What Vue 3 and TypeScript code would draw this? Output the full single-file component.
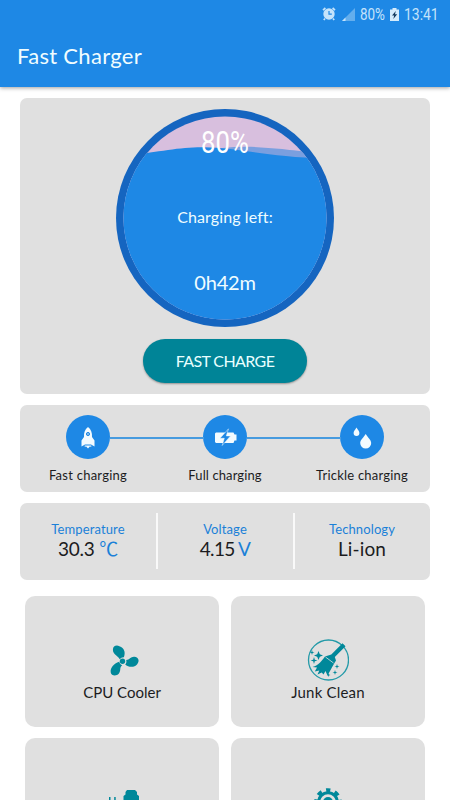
<script setup lang="ts">
interface Metric {
  label: string
  value: string
  unit: string
  key: string
}

const metrics: Metric[] = [
  { label: 'Temperature', value: '30.3', unit: '℃', key: 'temp' },
  { label: 'Voltage', value: '4.15', unit: 'V', key: 'volt' },
  { label: 'Technology', value: 'Li-ion', unit: '', key: 'tech' },
]
</script>

<template>
  <div class="screen">
    <header class="app-bar">
      <div class="status">
        <svg class="alarm" width="14" height="14" viewBox="0 0 14 14">
          <path d="M1 3.2 3.4 1M13 3.2 10.6 1M3 11.5 1.8 13M11 11.5l1.2 1.5" stroke="#c4e3fb" stroke-width="1.7" />
          <circle cx="7" cy="7" r="5.7" fill="#c4e3fb" />
          <path d="M7 4v3.2h2.8" fill="none" stroke="#1e88e5" stroke-width="1.2" />
        </svg>
        <svg class="signal" width="13" height="13" viewBox="0 0 13 13">
          <path d="M0 13 13 0V13Z" fill="#64aeed" />
          <path d="M0 13 3.5 9.5V13Z" fill="#c4e3fb" />
        </svg>
        <span class="pct">80%</span>
        <svg class="batt" width="9" height="13" viewBox="0 0 9 13">
          <path d="M0 1.5H2.5V0h4v1.5H9V13H0Z" fill="#d5ecfc" />
          <path d="M5.8 3 2 7.4h2.2L3.3 11 7.2 6.3H5Z" fill="#12385c" />
        </svg>
        <span class="clock">13:41</span>
      </div>
      <h1>Fast Charger</h1>
    </header>

    <main>
      <section class="card charge">
        <div class="gauge">
          <svg width="218" height="218" viewBox="0 0 218 218">
            <defs>
              <clipPath id="dial"><circle cx="109" cy="109" r="101.5" /></clipPath>
            </defs>
            <circle cx="109" cy="109" r="109" fill="#1565c0" />
            <g clip-path="url(#dial)">
              <rect width="218" height="218" fill="#d8bfde" />
              <path d="M0 44C60 50 104 34 145 38.500C166 39.500 182 42 218 46V218H0Z" fill="#7a9fdf" />
              <path d="M0 48C45 43 62 38 88 38.300C127 39 153 49 218 49.500V218H0Z" fill="#1e88e5" />
            </g>
          </svg>
          <span class="level">80%</span>
          <span class="caption">Charging left:</span>
          <span class="remaining">0h42m</span>
        </div>
        <button class="fast" type="button"><span>FAST CHARGE</span></button>
      </section>

      <section class="card stages">
        <div class="stage">
          <div class="dot">
            <svg width="44" height="44" viewBox="0 0 44 44">
              <path d="M22 12C18.700 14.500 17.800 18 18 22L15.500 25.500V31.500L19 29.500H25L28.500 31.500V25.500L26 22C26.200 18 25.300 14.500 22 12Z" fill="#f3fbff" />
              <circle cx="22" cy="19" r="1.6" fill="#8abce5" stroke="#1e88e5" />
              <path d="M18.700 30.500h6.600v1.200l-1.500-.3L22 33.500l-1.800-2.100-1.500.3Z" fill="#f3fbff" />
            </svg>
          </div>
          <span class="s1">Fast charging</span>
        </div>
        <div class="stage">
          <div class="dot">
            <svg width="44" height="44" viewBox="0 0 44 44">
              <path d="M13 17.500H30.500L31.500 19.500H33.500V25.500H31.500L30.500 28H13L12 27V18.500Z" fill="#f3fbff" />
              <path d="M25.500 13.800 17 23.300H21.300L19.200 30.500 27.500 20.900H23.300Z" fill="#1e88e5" stroke="#f3fbff" stroke-width=".5" />
            </svg>
          </div>
          <span class="s2">Full charging</span>
        </div>
        <div class="stage">
          <div class="dot">
            <svg width="44" height="44" viewBox="0 0 44 44" fill="#f3fbff">
              <path d="M16.500 12.500C15 15 13.600 16.300 13.600 18a2.900 2.900 0 0 0 5.800 0C19.400 16.300 18 15 16.500 12.500Z" />
              <path d="M25.700 19C23.500 22.800 20.200 25 20.200 28a5.500 5.500 0 0 0 11 0C31.200 25 27.900 22.800 25.700 19Z" />
            </svg>
          </div>
          <span class="s3">Trickle charging</span>
        </div>
      </section>

      <section class="card metrics">
        <div v-for="m in metrics" :key="m.key" class="metric" :class="m.key">
          <span class="label">{{ m.label }}</span>
          <span class="value">{{ m.value }}<em v-if="m.unit">&nbsp;{{ m.unit }}</em></span>
        </div>
      </section>

      <section class="tools">
        <div class="tool">
          <svg width="42" height="42" viewBox="0 0 42 42" fill="#00889a">
            <g transform="translate(.2 .7)">
              <path d="M18.500 19.500C17 16 11.700 15 11.700 10C11.700 6.500 15 5 18.200 6.500C23.300 8.500 24.500 12.500 22.700 17.500C21 17.300 19.800 18 18.500 19.500Z" />
              <path d="M24 24.700C27 27.500 33 28.200 36 24.500C39 20.700 36.800 17.300 33.300 17C29.500 16.600 28.300 20.300 25 20.200C25.500 22 25.200 23.500 24 24.700Z" />
              <path d="M18 22C12.500 23.700 9 28 9.500 32.500C10 36.500 15.500 36.500 17.500 34C20.300 30.500 17.800 28 21 25.500C19.500 25 18.500 24 18 22Z" />
              <circle cx="21.300" cy="21.500" r="2.700" />
            </g>
          </svg>
          <span class="t1">CPU Cooler</span>
        </div>
        <div class="tool">
          <svg width="42" height="42" viewBox="0 0 42 42" fill="#00889a">
            <circle cx="21.500" cy="21" r="20" fill="none" stroke="#239aa8" stroke-width="1.300" />
            <path d="M35.500 4.300 38.500 7.300 27.800 18 29 21.500C26 26 24 30.500 20.500 36.500L18.500 32 16.500 35.500 14.700 33.500 10.500 35.500 12.300 31.500 7.800 32.500 10 28.500 5.500 28C12 26 14.500 22 18 17.500L24.300 15.500Z" />
            <path d="m18.500 18 8 6" fill="none" stroke="#e0e0e0" stroke-width=".8" />
            <path d="m11.500 12 1.300 3.200L16 16.500l-3.200 1.300L11.500 21l-1.300-3.200L7 16.500l3.200-1.300ZM7 18l.8 2.700 2.700.8-2.700.8L7 25l-.8-2.700-2.700-.8 2.700-.8ZM5 11l.6 1.900 1.900.6-1.900.6L5 16l-.6-1.900-1.900-.6 1.900-.6ZM30 25l.6 1.900 1.900.6-1.900.6L30 30l-.6-1.900-1.900-.6 1.900-.6ZM28 31l.6 1.900 1.900.6-1.900.6L28 36l-.6-1.900-1.900-.6 1.900-.6ZM21.500 34l.5 1.500 1.500.5-1.500.5-.5 1.500-.5-1.500-1.500-.5 1.500-.5Z" />
          </svg>
          <span class="t2">Junk Clean</span>
        </div>
        <div class="tool">
          <svg width="42" height="42" viewBox="0 0 42 42" fill="#00889a">
            <path d="M8 16H9.500V28H8ZM13.200 16H14.700V28H13.200ZM26 9H34L36 11V13.500L38 15V32H22.500V15L24.500 13.500V11Z" />
          </svg>
        </div>
        <div class="tool">
          <svg width="42" height="42" viewBox="0 0 42 42">
            <circle cx="21" cy="21" r="9.300" fill="none" stroke="#00889a" stroke-width="3" />
            <circle cx="21" cy="21" r="11.800" fill="none" stroke="#00889a" stroke-width="4" stroke-dasharray="4.630 4.630" stroke-dashoffset="2.315" transform="rotate(-90 21 21)" />
            <circle cx="21" cy="21" r="5" fill="#00889a" />
          </svg>
        </div>
      </section>
    </main>
  </div>
</template>

<style>
body {
  background: #fff;
}
</style>

<style scoped>
.screen {
  width: 450px;
  height: 800px;
  overflow: hidden;
  background: #fff;
  color: #1c1c1e;
  font-family: Lato, "Noto Sans CJK SC", sans-serif;
}
.app-bar {
  box-sizing: border-box;
  height: 87px;
  background: #1e88e5;
  box-shadow: 0 1px 4px rgba(0, 0, 0, 0.38);
  color: #f0fdff;
}
.status {
  display: flex;
  height: 28px;
  align-items: center;
  justify-content: flex-end;
  padding-right: 12px;
  color: #c4e3fb;
  font: 16px/29px Roboto, sans-serif;
}
.alarm {
  margin-right: 6px;
}
.signal {
  margin-right: 5px;
}
.pct,
.clock {
  display: block;
  white-space: nowrap;
}
.pct {
  width: 26px;
  transform: scaleX(0.84);
  transform-origin: left;
}
.batt {
  margin: 0 5px 0 4px;
}
.clock {
  width: 34px;
  transform: scaleX(0.87);
  transform-origin: left;
}
h1 {
  margin: 14px 0 0 17px;
  font-size: 22px;
  line-height: 28px;
  font-weight: 400;
  letter-spacing: 0.3px;
}
main {
  display: flex;
  flex-direction: column;
  padding: 11px 20px 0;
}
.card {
  border-radius: 7px;
  background: #e0e0e0;
}
.charge {
  display: flex;
  flex-direction: column;
  align-items: center;
  height: 295.5px;
  padding-top: 11px;
  box-sizing: border-box;
}
.gauge {
  position: relative;
  width: 218px;
  height: 218px;
  color: #f0fdff;
}
.gauge svg {
  display: block;
}
.level,
.caption,
.remaining {
  position: absolute;
  left: 0;
  width: 100%;
  text-align: center;
  white-space: nowrap;
}
.level {
  top: 16px;
  font: 400 31px/36px Roboto, sans-serif;
  color: #fff;
  transform: scaleX(0.83);
}
.caption {
  top: 96px;
  font-size: 16px;
  line-height: 24px;
  letter-spacing: 0.1px;
}
.remaining {
  top: 160px;
  font-size: 20px;
  line-height: 26px;
  letter-spacing: -0.2px;
}
.fast {
  width: 164px;
  height: 44px;
  margin-top: 12px;
  padding: 0;
  border: 0;
  border-radius: 22px;
  background: #008497;
  box-shadow: 0 1px 2px rgba(0, 0, 0, 0.35);
  color: #e8ffff;
  font: 16px/44px Lato, sans-serif;
  letter-spacing: -0.6px;
  white-space: nowrap;
}
.stages {
  display: grid;
  grid-template-columns: repeat(3, 137px);
  height: 87.5px;
  margin-top: 11px;
  justify-content: center;
}
.stage {
  position: relative;
  display: flex;
  flex-direction: column;
  align-items: center;
  padding-top: 10.5px;
  font-size: 13px;
  line-height: 20px;
  white-space: nowrap;
  letter-spacing: 0.2px;
}
.s1 {
  letter-spacing: 0.25px;
}
.s2 {
  letter-spacing: 0.1px;
}
.stage + .stage::before {
  content: "";
  position: absolute;
  top: 32.5px;
  right: 90px;
  width: 94px;
  height: 1.5px;
  background: #479bdf;
}
.dot {
  height: 44px;
  width: 44px;
  margin-bottom: 5.5px;
  border-radius: 50%;
  background: #1e88e5;
}
.dot svg {
  display: block;
}
.metrics {
  display: grid;
  grid-template-columns: repeat(3, 137px);
  justify-content: center;
  height: 77px;
  margin-top: 11px;
}
.metric {
  position: relative;
  display: flex;
  flex-direction: column;
  align-items: center;
  height: 56px;
  margin-top: 10px;
  padding-top: 6px;
  box-sizing: border-box;
  white-space: nowrap;
}
.metric + .metric::before {
  content: "";
  position: absolute;
  top: 0;
  left: -1px;
  width: 2px;
  height: 100%;
  background: #f9f9f9;
}
.label {
  color: #1b80d8;
  font-size: 13px;
  line-height: 20px;
  letter-spacing: 0.12px;
}
.value {
  font-size: 19px;
  line-height: 20px;
  letter-spacing: -0.2px;
}
.volt .value {
  letter-spacing: -0.7px;
}
.tech .value {
  letter-spacing: 0.15px;
}
em {
  color: #1b80d8;
  font-style: normal;
}
.tools {
  display: grid;
  grid-template-columns: 194px 194px;
  grid-auto-rows: 131px;
  gap: 11px 12px;
  margin: 16px 5px 0;
}
.tool {
  display: flex;
  flex-direction: column;
  align-items: center;
  padding-top: 43px;
  box-sizing: border-box;
  border-radius: 10px;
  background: #e0e0e0;
  font-size: 15px;
  line-height: 20px;
}
.tool svg {
  flex: none;
}
.tool span {
  margin-top: 1px;
  white-space: nowrap;
}
.t2 {
  letter-spacing: 0.2px;
}
</style>
